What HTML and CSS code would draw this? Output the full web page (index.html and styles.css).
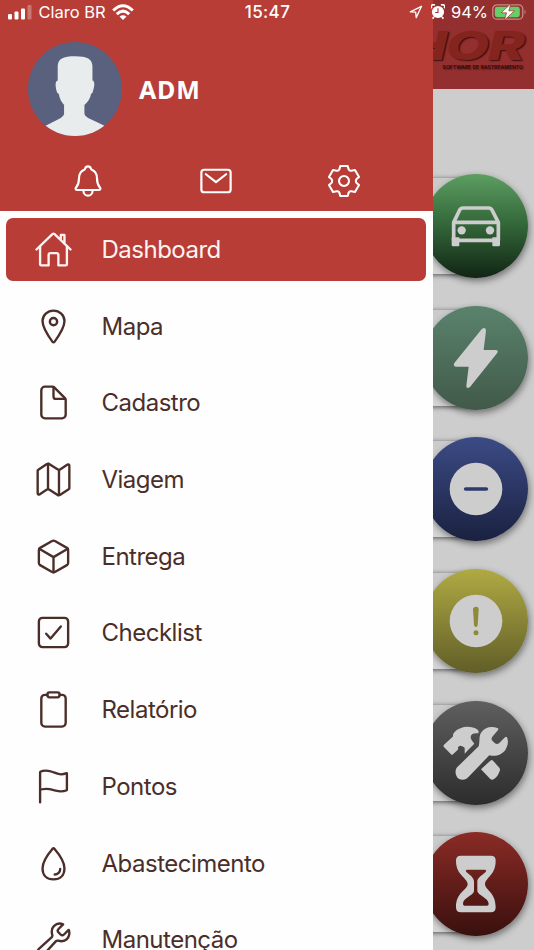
FILE: index.html
```
<!DOCTYPE html>
<html lang="pt-BR">
<head>
  <meta charset="utf-8">
  <title>Menu</title>
  <link rel="stylesheet" href="styles.css">
</head>
<body>

  <div class="page">
    <div class="page-header">
      <div class="logo">
        <div class="logo-name">THOR</div>
        <div class="logo-sub">SOFTWARE DE RASTREAMENTO</div>
      </div>
    </div>

    <div class="cards">
      <div class="card">
        <div class="circle green">
          <svg viewBox="0 0 312 312">
            <g fill="none" stroke="#cdcdcd" stroke-width="11" stroke-linejoin="round">
              <path d="M89 199V145L107 108Q110 102 117 102H194Q201 102 204 108L223 145V199Z"/>
              <path d="M89 145H223"/>
            </g>
            <path fill="#cdcdcd" d="M83 190H106V214Q106 217 103 217H87Q83 217 83 213ZM205 190H228V213Q228 217 224 217H208Q205 217 205 214Z"/>
            <circle cx="113" cy="169" r="12.5" fill="#cdcdcd"/>
            <circle cx="198" cy="169" r="12.5" fill="#cdcdcd"/>
          </svg>
        </div>
      </div>
      <div class="card">
        <div class="circle teal">
          <svg viewBox="0 0 312 312">
            <path fill="#cdcdcd" d="M174 68Q186 62 186 74L179 132H215Q225 133 219 142L138 243Q127 251 127 239L134 182H96Q86 181 91 171Z"/>
          </svg>
        </div>
      </div>
      <div class="card">
        <div class="circle blue">
          <svg viewBox="0 0 312 312">
            <circle cx="156" cy="156" r="79" fill="#cdcdcd"/>
            <path d="M125 156H187" stroke="#2e3a6e" stroke-width="11" stroke-linecap="round"/>
          </svg>
        </div>
      </div>
      <div class="card">
        <div class="circle yellow">
          <svg viewBox="0 0 312 312">
            <circle cx="156" cy="156" r="79" fill="#cdcdcd"/>
            <path fill="#8f8a36" d="M147 121Q148 113 156 113Q164 113 164 121L161 168Q160 174 156 174Q151 174 150 168Z"/>
            <circle cx="156" cy="191" r="7.5" fill="#8f8a36"/>
          </svg>
        </div>
      </div>
      <div class="card">
        <div class="circle gray">
          <svg viewBox="0 0 312 312">
            <g fill="#cdcdcd">
              <path d="M59 137Q57 134 60 131L82 111Q85 109 87 106Q86 99 91 94C108 76 139 72 161 86Q166 90 163 97C149 95 140 99 140 108Q139 115 147 123L151 128L133 146L122 158V140Q107 129 102 139Q104 145 100 148L87 160Q84 163 81 160Z"/>
              <path d="M220 81C202 74 181 79 171 95C164 107 168 123 164 136L100 198C91 208 94 227 104 233C115 239 127 236 134 227L196 163C216 168 235 160 244 147C252 134 254 121 249 109Q247 106 243 109L225 127Q219 131 213 127L205 119Q200 114 205 107L222 87Q225 83 220 81Z"/>
              <path d="M171 205L199 179Q203 175 207 179L226 200Q230 206 226 212Q222 226 209 235Q203 238 198 233Z"/>
            </g>
          </svg>
        </div>
      </div>
      <div class="card">
        <div class="circle red">
          <svg viewBox="0 0 312 312">
            <path fill="#cdcdcd" fill-rule="evenodd" d="M111 71H200Q216 71 215 87C215 130 183 138 183 156C183 174 215 180 215 225Q216 241 200 241H111Q95 241 96 225C96 180 131 174 131 156C131 138 96 130 96 87Q95 71 111 71ZM128 113Q123 116 127 120C140 130 149 138 150 147V178C148 191 116 198 117 216Q117 221 122 221H189Q194 221 194 216C194 198 163 191 160 178V147C161 138 173 130 185 120Q189 116 184 113Z"/>
          </svg>
        </div>
      </div>
    </div>
  </div>

  <div class="drawer">
    <div class="drawer-header">
      <div class="user">
        <svg class="avatar" viewBox="83 125 283 283">
          <path fill="#e8eced" d="M172 240V201C171 176 187 168 224 168C261 168 277 177 276 201V240C283 241 283 254 278 270Q277 279 272 280C270 294 261 306 252 314V339C253 353 280 358 318 379V410H130V379C167 358 190 353 191 339V314C184 306 177 294 175 280Q170 279 168 270C164 254 165 241 172 240Z"/>
        </svg>
        <span class="user-name">ADM</span>
      </div>
      <div class="shortcuts">
        <a><svg class="icon" viewBox="0 0 512 512">
          <path d="M427.68 351.43C402 320 383.87 304 383.87 217.35 383.87 138 343.35 109.73 310 96c-4.43-1.82-8.6-6-9.95-10.55C294.2 65.54 277.8 48 256 48s-38.21 17.55-44 37.47c-1.35 4.6-5.52 8.71-9.95 10.53-33.39 13.75-73.87 41.92-73.87 121.35C128.13 304 110 320 84.32 351.43 73.68 364.45 83 384 101.61 384h308.88c18.51 0 27.77-19.61 17.19-32.57zM320 384v16a64 64 0 01-128 0v-16"/>
        </svg></a>
        <a><svg class="icon" viewBox="0 0 512 512">
          <rect x="48" y="96" width="416" height="320" rx="40"/>
          <path d="M112 160l144 112 144-112"/>
        </svg></a>
        <a><svg class="icon gear" viewBox="-54 -54 108 108">
          <path d="M-11-45H11L14-35Q16-30 22-31L33-33L45-12L37-5Q34 0 37 5L45 12L33 33L22 31Q16 30 14 35L11 45H-11L-14 35Q-16 30-22 31L-33 33L-45 12L-37 5Q-34 0-37-5L-45-12L-33-33L-22-31Q-16-30-14-35Z"/>
          <circle r="15"/>
        </svg></a>
      </div>
    </div>

    <div class="menu">
      <a class="item active">
        <svg class="icon" viewBox="0 0 512 512">
          <path d="M80 212v236a16 16 0 0016 16h96V328a24 24 0 0124-24h80a24 24 0 0124 24v136h96a16 16 0 0016-16V212"/>
          <path d="M480 256L266.89 52c-5-5.28-16.69-5.34-21.78 0L32 256M400 179V64h-48v69"/>
        </svg>
        <span>Dashboard</span>
      </a>
      <a class="item">
        <svg class="icon" viewBox="0 0 512 512">
          <path d="M256 48c-79.5 0-144 61.39-144 137 0 87 96 224.87 131.25 272.49a15.77 15.77 0 0025.5 0C304 409.89 400 272.07 400 185c0-75.61-64.5-137-144-137z"/>
          <circle cx="256" cy="192" r="48"/>
        </svg>
        <span>Mapa</span>
      </a>
      <a class="item">
        <svg class="icon" viewBox="0 0 512 512">
          <path d="M416 221.25V416a48 48 0 01-48 48H144a48 48 0 01-48-48V96a48 48 0 0148-48h98.75a32 32 0 0122.62 9.37l141.26 141.26a32 32 0 019.37 22.62z"/>
          <path d="M256 56v120a32 32 0 0032 32h120"/>
        </svg>
        <span>Cadastro</span>
      </a>
      <a class="item">
        <svg class="icon" viewBox="0 0 512 512">
          <path d="M313.27 124.64L198.73 51.36a32 32 0 00-29.28.35L56.51 127.49A16 16 0 0048 141.63v295.8a16 16 0 0023.49 14.14l97.82-63.79a32 32 0 0129.5-.24l111.86 73a32 32 0 0029.27-.11l115.43-75.94a16 16 0 008.63-14.2V74.57a16 16 0 00-23.49-14.14l-98 63.86a32 32 0 01-29.24.35zM328 128v336M184 384V48"/>
        </svg>
        <span>Viagem</span>
      </a>
      <a class="item">
        <svg class="icon" viewBox="0 0 512 512">
          <path d="M448 341.37V170.61A32 32 0 00432.11 143l-152-88.46a47.94 47.94 0 00-48.24 0L79.89 143A32 32 0 0064 170.61v170.76A32 32 0 0079.89 369l152 88.46a48 48 0 0048.24 0l152-88.46A32 32 0 00448 341.37z"/>
          <path d="M69 153.99l187 110 187-110M256 463.99v-200"/>
        </svg>
        <span>Entrega</span>
      </a>
      <a class="item">
        <svg class="icon" viewBox="0 0 512 512">
          <path d="M352 176L217.6 336 160 272"/>
          <rect x="64" y="64" width="384" height="384" rx="48"/>
        </svg>
        <span>Checklist</span>
      </a>
      <a class="item">
        <svg class="icon" viewBox="0 0 512 512">
          <path d="M336 64h32a48 48 0 0148 48v320a48 48 0 01-48 48H144a48 48 0 01-48-48V112a48 48 0 0148-48h32"/>
          <rect x="176" y="32" width="160" height="64" rx="26"/>
        </svg>
        <span>Relatório</span>
      </a>
      <a class="item">
        <svg class="icon" viewBox="0 0 512 512">
          <path d="M80 464V68.14a8 8 0 014-6.9C91.81 56.66 112.92 48 160 48c64 0 145 48 192 48a199.53 199.53 0 0077.23-15.77 2 2 0 012.77 1.85v219.36a4 4 0 01-2.39 3.65C421.37 308.7 392.33 320 352 320c-48 0-128-32-192-32s-80 16-80 16"/>
        </svg>
        <span>Pontos</span>
      </a>
      <a class="item">
        <svg class="icon" viewBox="0 0 512 512">
          <path d="M400 320c0 88.37-55.63 144-144 144s-144-55.63-144-144c0-94.83 103.23-222.85 134.89-259.88a12 12 0 0118.23 0C296.77 97.15 400 225.17 400 320z"/>
          <path d="M344 328a72 72 0 01-72 72"/>
        </svg>
        <span>Abastecimento</span>
      </a>
      <a class="item">
        <svg class="icon" viewBox="0 0 512 512">
          <path d="M393.87 190a32.1 32.1 0 01-45.25 0l-26.57-26.57a32.09 32.09 0 010-45.26L382.19 58a1 1 0 00-.3-1.64c-38.82-16.64-89.15-8.16-121.11 23.57-30.58 30.35-32.32 76-21.12 115.84a31.93 31.93 0 01-9.06 32.08L64 380a48.17 48.17 0 1068 68l153.86-167a31.93 31.93 0 0131.6-9.13c39.54 10.59 84.54 8.6 114.72-21.19 32.49-32 39.5-88.56 23.75-120.93a1 1 0 00-1.6-.26z"/>
        </svg>
        <span>Manutenção</span>
      </a>
    </div>
  </div>

  <div class="status-bar">
    <div class="status-left">
      <svg width="24" height="15" viewBox="0 0 24 15" fill="#fff">
        <rect x="0" y="9" width="4" height="5.5" rx="1"/>
        <rect x="6.5" y="6.5" width="4" height="8" rx="1"/>
        <rect x="13" y="3.5" width="4" height="11" rx="1"/>
        <rect x="19.5" y="0" width="4" height="14.5" rx="1" opacity=".3"/>
      </svg>
      <span>Claro BR</span>
      <svg width="22" height="17" viewBox="0 0 22 17" fill="none" stroke="#fff" stroke-width="3">
        <path d="M1.2 6.5Q11-3 20.8 6.5M4.8 10.2Q11 4.2 17.2 10.2"/>
        <path d="M11 16L7.5 12.6Q11 9.7 14.5 12.6Z" fill="#fff" stroke="none"/>
      </svg>
    </div>
    <div class="status-time">15:47</div>
    <div class="status-right">
      <svg width="14" height="14" viewBox="0 0 14 14" fill="none" stroke="#fff" stroke-width="1.3" stroke-linejoin="round">
        <path d="M1.3 6.8L12.5 1.3L7.2 12.6L6.7 7.2Z"/>
      </svg>
      <svg class="alarm" width="14" height="16" viewBox="0 0 14 16">
        <circle cx="7" cy="8" r="6.1" fill="#fff"/>
        <path d="M.8 4.2A2 2 0 013.8 1.3M10.2 1.3A2 2 0 0113.2 4.2M3 13L1.6 14.6M11 13L12.4 14.6" stroke="#fff" stroke-width="1.7" fill="none"/>
        <path d="M7 4.2V8.5H4.2" fill="none" stroke="#933" stroke-width="1.1"/>
      </svg>
      <span>94%</span>
      <svg class="battery" width="35" height="18" viewBox="0 0 35 18">
        <rect x=".8" y="1.8" width="30" height="14.4" rx="4.3" fill="none" stroke="#c78b87" stroke-width="1.3"/>
        <path d="M32.6 6.5Q34.7 9 32.6 11.5Z" fill="#c78b87"/>
        <rect x="2.8" y="3.8" width="25" height="10.4" rx="2.4" fill="#66cf65"/>
        <path d="M18.8 .7L9.2 9.8H14.6L12.4 17.3L22.4 7.8H16.8Z" fill="#fff" stroke="#933" stroke-width=".7"/>
      </svg>
    </div>
  </div>

</body>
</html>
```
FILE: styles.css
```
* { box-sizing: border-box; }
body {
  margin: 0;
  height: 950px;
  position: relative;
  overflow: hidden;
  font-family: Inter, "Liberation Sans", sans-serif;
  background: #cdcdcd;
}
svg { display: block; flex-shrink: 0; }

/* page behind the menu */
.page { height: 950px; overflow: hidden; }
.page-header {
  height: 89px;
  padding: 28px 11px 0 0;
  background: #932f2e;
  display: flex;
  justify-content: flex-end;
}
.logo {
  display: flex;
  flex-direction: column;
  align-items: flex-end;
}
.logo-name {
  font: italic 800 40px/36px Inter, sans-serif;
  letter-spacing: -1px;
  color: #84241f;
  text-shadow: 1px 1px 1px #3d100e;
  transform: scaleX(1.4);
  transform-origin: right;
}
.logo-sub {
  font-size: 5.1px;
  line-height: 6px;
  font-weight: 600;
  color: #260b0a;
  text-shadow: 1px 1px 1px #5a1a19;
  white-space: nowrap;
}
.cards {
  padding: 89px 58px 0 60px;
  display: flex;
  flex-direction: column;
  gap: 35.7px;
}
.card {
  height: 96px;
  flex-shrink: 0;
  display: flex;
  align-items: center;
  justify-content: flex-end;
  background: linear-gradient(#cacaca, #d5d5d5);
  box-shadow: 0 1px 5px rgba(0, 0, 0, .6);
}
.circle {
  width: 104px;
  height: 104px;
  margin-right: -52px;
  border-radius: 50%;
  flex-shrink: 0;
  box-shadow: 1px 3px 7px rgba(0, 0, 0, .45);
}
.green { background: linear-gradient(#5c9e61, #326538 50%, #112514); }
.teal { background: linear-gradient(#5a836c, #41594a); }
.blue { background: linear-gradient(#3c4b86, #1a2140); }
.yellow { background: linear-gradient(#b0aa43, #615e28); }
.gray { background: linear-gradient(#5f5f5f, #2c2c2c); }
.red { background: linear-gradient(#8b2b26, #39100e); }

/* side menu */
.drawer {
  position: absolute;
  top: 0;
  left: 0;
  width: 433.4px;
  height: 950px;
  overflow: hidden;
  background: #fefefe;
}
.drawer-header {
  height: 211px;
  padding-top: 41.5px;
  background: #b83d36;
  color: #fff;
}
.user {
  display: flex;
  align-items: center;
  gap: 17px;
  padding-left: 27.5px;
}
.avatar {
  width: 94.5px;
  height: 94.5px;
  border-radius: 50%;
  background: #5a617e;
}
.user-name {
  font: 700 25px/30px "Noto Sans", sans-serif;
  letter-spacing: .8px;
}
.shortcuts {
  display: grid;
  grid-template-columns: repeat(3, 128px);
  justify-content: center;
  justify-items: center;
  margin-top: 27px;
  padding-right: 1px;
}
.icon {
  width: 39px;
  height: 39px;
  fill: none;
  stroke: currentColor;
  stroke-width: 31;
  stroke-linecap: round;
  stroke-linejoin: round;
}
.shortcuts .icon { width: 36px; height: 36px; }
.shortcuts .gear { stroke-width: 6.3; }
.menu {
  display: flex;
  flex-direction: column;
  gap: 13.7px;
  padding: 7px 7px 0 6px;
}
.item {
  display: flex;
  align-items: center;
  gap: 28.5px;
  height: 63px;
  flex-shrink: 0;
  padding-left: 28px;
  border-radius: 7px;
  font-size: 24px;
  letter-spacing: -.5px;
  color: #4b2e29;
}
.item.active {
  background: #b83d36;
  color: #fdf3f2;
}

/* phone status bar */
.status-bar {
  position: absolute;
  top: 0;
  left: 0;
  width: 534px;
  height: 24px;
  padding: 0 7px 0 8px;
  display: grid;
  grid-template-columns: 1fr auto 1fr;
  align-items: center;
  color: #fff;
  font-size: 16.5px;
}
.status-left, .status-right {
  display: flex;
  align-items: center;
}
.status-left { gap: 6.5px; }
.status-right { justify-content: flex-end; }
.status-time {
  font-weight: 500;
  font-size: 17px;
  letter-spacing: .4px;
}
.alarm { margin: 0 6px 0 8px; }
.battery { margin-left: 4px; }
```
